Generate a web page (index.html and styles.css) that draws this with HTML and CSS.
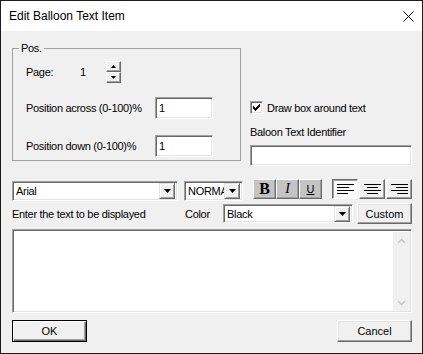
FILE: index.html
```html
<!DOCTYPE html>
<html lang="en">
<head>
    <meta charset="UTF-8">
    <title>Edit Balloon Text Item</title>
    <link rel="stylesheet" href="styles.css">
</head>
<body>
<div class="dialog">
    <div class="titlebar">
        <span class="title">Edit Balloon Text Item</span>
        <svg class="close" width="11" height="11" viewBox="0 0 11 11">
            <path d="M0.5 0.5L10.5 10.5M10.5 0.5L0.5 10.5" stroke="#000" stroke-width="1"/>
        </svg>
    </div>

    <div class="content">
        <div class="top">
            <fieldset class="group">
                <legend>Pos.</legend>
                <div class="row page-row">
                    <span class="page-label">Page:</span>
                    <span class="page-num">1</span>
                    <div class="spin">
                        <button class="spin-btn">
                            <svg width="5" height="3" viewBox="0 0 5 3"><path d="M2.5 0L5 3H0Z" fill="#000"/></svg>
                        </button>
                        <button class="spin-btn">
                            <svg width="5" height="3" viewBox="0 0 5 3"><path d="M0 0H5L2.5 3Z" fill="#000"/></svg>
                        </button>
                    </div>
                </div>
                <div class="row">
                    <label for="across" class="row-label">Position across (0-100)%</label>
                    <input type="text" id="across" class="field num" value="1">
                </div>
                <div class="row row-down">
                    <label for="down" class="row-label">Position down (0-100)%</label>
                    <input type="text" id="down" class="field num" value="1">
                </div>
            </fieldset>

            <div class="side">
                <label class="check">
                    <span class="check-box">
                        <svg width="7" height="7" viewBox="0 0 7 7"><path d="M0 2H1V3H2V4H3V3H4V2H5V1H6V0H7V3H6V4H5V5H4V6H3V7H2V6H1V5H0Z" fill="#000"/></svg>
                    </span>
                    Draw box around text
                </label>
                <div class="side-label">Baloon Text Identifier</div>
                <input type="text" class="field ident">
            </div>
        </div>

        <div class="toolbar">
            <div class="combo font-combo">
                <span class="combo-text">Arial</span>
                <span class="combo-btn"><svg width="7" height="4" viewBox="0 0 7 4"><path d="M0 0H7L3.5 4Z" fill="#000"/></svg></span>
            </div>
            <div class="combo style-combo">
                <span class="combo-text">NORMAL</span>
                <span class="combo-btn"><svg width="7" height="4" viewBox="0 0 7 4"><path d="M0 0H7L3.5 4Z" fill="#000"/></svg></span>
            </div>
            <div class="btn-group">
                <button class="tool fmt bold">B</button>
                <button class="tool fmt italic">I</button>
                <button class="tool fmt under">U</button>
            </div>
            <div class="btn-group align-group">
                <button class="tool align pressed">
                    <svg width="17" height="11" viewBox="0 0 17 11"><path d="M0 0.5H17M0 3.5H12M0 6.5H17M0 9.5H11" stroke="#000"/></svg>
                </button>
                <button class="tool align">
                    <svg width="17" height="11" viewBox="0 0 17 11"><path d="M0 0.5H17M3 3.5H14M0 6.5H17M3 9.5H14" stroke="#000"/></svg>
                </button>
                <button class="tool align">
                    <svg width="17" height="11" viewBox="0 0 17 11"><path d="M0 0.5H17M5 3.5H17M0 6.5H17M6 9.5H17" stroke="#000"/></svg>
                </button>
            </div>
        </div>

        <div class="text-row">
            <span class="enter-label">Enter the text to be displayed</span>
            <span class="color-label">Color</span>
            <div class="combo color-combo">
                <span class="combo-text">Black</span>
                <span class="combo-btn"><svg width="7" height="4" viewBox="0 0 7 4"><path d="M0 0H7L3.5 4Z" fill="#000"/></svg></span>
            </div>
            <button class="btn custom-btn">Custom</button>
        </div>

        <div class="memo">
            <div class="memo-text"></div>
            <div class="scrollbar">
                <svg width="9" height="6" viewBox="0 0 9 6"><path d="M1 5L4.5 1.5L8 5" stroke="#c2c2c2" fill="none" stroke-width="1.3"/></svg>
                <svg width="9" height="6" viewBox="0 0 9 6"><path d="M1 1L4.5 4.5L8 1" stroke="#c2c2c2" fill="none" stroke-width="1.3"/></svg>
            </div>
        </div>

        <div class="footer">
            <button class="btn default-btn">OK</button>
            <button class="btn">Cancel</button>
        </div>
    </div>
</div>
</body>
</html>
```

FILE: styles.css
```css
* {
    box-sizing: border-box;
}
body {
    margin: 0;
    font-family: "Liberation Sans", Arial, sans-serif;
    font-size: 11px;
    color: #000;
}
button, input {
    font-family: inherit;
    font-size: 11px;
    color: #000;
    margin: 0;
    padding: 0;
}

.dialog {
    width: 423px;
    height: 354px;
    border: 1px solid #1c1c1c;
    background: #f0f0f0;
    display: flex;
    flex-direction: column;
}
.titlebar {
    height: 30px;
    flex-shrink: 0;
    background: #fff;
    display: flex;
    align-items: center;
    justify-content: space-between;
    padding: 0 8px 0 8px;
}
.title {
    font-size: 12px;
}

.content {
    flex: 1;
    padding: 0 10px 0 11px;
    display: flex;
    flex-direction: column;
    letter-spacing: -0.3px;
}

/* sunken 3d edge used by edits, combos, memo */
.field, .combo, .memo, .check-box {
    background: #fff;
    border: 1px solid;
    border-color: #a0a0a0 #fff #fff #a0a0a0;
    box-shadow: inset 1px 1px #696969, inset -1px -1px #e3e3e3;
}
.field {
    outline: none;
    padding: 0 0 0 3px;
}

.top {
    display: flex;
    align-items: flex-start;
    gap: 9px;
    margin-top: 11px;
}
.group {
    width: 229px;
    margin: 0;
    padding: 6px 0 3px 0;
    border: 1px solid #a0a0a0;
}
.group legend {
    margin-left: 6px;
    padding: 0 2px;
    line-height: 13px;
}
.row {
    display: flex;
    align-items: center;
    padding-left: 13px;
    margin-top: 14px;
}
.row-down {
    margin-top: 16px;
}
.page-row {
    margin-top: 0;
    height: 22px;
}
.page-label {
    width: 54px;
}
.page-num {
    width: 26px;
}
.spin {
    display: flex;
    flex-direction: column;
}
.spin-btn {
    width: 15px;
    height: 11px;
    background: #f0f0f0;
    border: 1px solid;
    border-color: #fff #696969 #696969 #fff;
    box-shadow: inset -1px -1px #a0a0a0;
    display: flex;
    align-items: center;
    justify-content: center;
}
.row-label {
    width: 129px;
}
.num {
    width: 58px;
    height: 22px;
}

.side {
    width: 162px;
    padding-top: 59px;
}
.check {
    display: flex;
    align-items: center;
    gap: 4px;
    height: 13px;
}
.check-box {
    width: 13px;
    height: 13px;
    display: flex;
    align-items: center;
    justify-content: center;
}
.side-label {
    margin-top: 12px;
    line-height: 13px;
}
.ident {
    margin-top: 6px;
    width: 162px;
    height: 21px;
}

.toolbar {
    display: flex;
    align-items: flex-start;
    margin-top: 13px;
}
.combo {
    display: flex;
    align-items: center;
    height: 20px;
    padding: 2px;
}
.combo-text {
    flex: 1;
    overflow: hidden;
    white-space: nowrap;
    padding-left: 1px;
}
.combo-btn {
    width: 16px;
    height: 16px;
    flex-shrink: 0;
    background: #f0f0f0;
    border: 1px solid;
    border-color: #e3e3e3 #696969 #696969 #e3e3e3;
    box-shadow: inset 1px 1px #fff, inset -1px -1px #a0a0a0;
    display: flex;
    align-items: center;
    justify-content: center;
}
.font-combo {
    width: 166px;
    margin-top: 2px;
}
.style-combo {
    width: 59px;
    margin-left: 6px;
    margin-top: 2px;
}
.btn-group {
    display: flex;
    margin-left: 10px;
}
.align-group {
    gap: 1px;
}
.tool {
    height: 20px;
    border: 1px solid;
    border-color: #fff #696969 #696969 #fff;
    box-shadow: inset -1px -1px #a0a0a0;
    display: flex;
    align-items: center;
    justify-content: center;
}
.fmt {
    width: 23px;
    background: #c4c4c4;
}
.bold {
    font-family: "Liberation Serif", "Times New Roman", serif;
    font-weight: bold;
    font-size: 16px;
}
.italic {
    font-family: "Liberation Serif", "Times New Roman", serif;
    font-style: italic;
    font-size: 14px;
}
.under {
    text-decoration: underline;
}
.align {
    width: 26px;
    background: #f0f0f0;
}
.align.pressed {
    background: #fafafa;
    border-color: #696969 #fff #fff #696969;
    box-shadow: inset 1px 1px #a0a0a0;
}

.text-row {
    display: flex;
    align-items: center;
    height: 21px;
    margin-top: 2px;
}
.enter-label {
    width: 173px;
}
.color-label {
    width: 38px;
}
.color-combo {
    width: 130px;
    height: 19px;
}

.btn {
    height: 22px;
    width: 75px;
    background: #f0f0f0;
    border: 1px solid;
    border-color: #fff #696969 #696969 #fff;
    box-shadow: inset -1px -1px #a0a0a0, inset 1px 1px #e3e3e3;
}
.custom-btn {
    width: 55px;
    height: 21px;
    margin-left: 4px;
}
.default-btn {
    border-color: #000;
    box-shadow: inset 1px 1px #fff, inset -1px -1px #696969, inset -2px -2px #a0a0a0;
}

.memo {
    margin-top: 5px;
    height: 84px;
    display: flex;
    padding: 2px 1px 1px 2px;
}
.memo-text {
    flex: 1;
}
.scrollbar {
    width: 17px;
    background: #f0f0f0;
    display: flex;
    flex-direction: column;
    justify-content: space-between;
    align-items: center;
    padding: 6px 0 5px;
}

.footer {
    display: flex;
    justify-content: space-between;
    margin-top: 7px;
}
```
